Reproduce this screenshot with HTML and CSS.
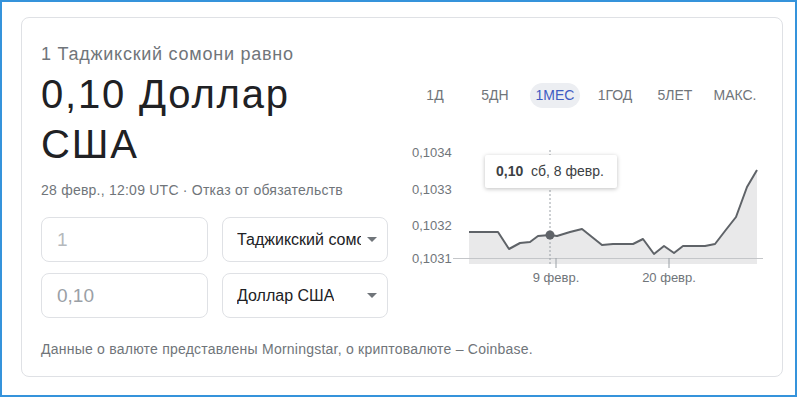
FILE: index.html
```html
<!DOCTYPE html>
<html lang="ru">
<head>
    <meta charset="UTF-8">
    <meta name="viewport" content="width=device-width, initial-scale=1.0">
    <link rel="stylesheet" href="styles.css">
    <title>Конвертер валют</title>
</head>
<body>
<div class="frame">
    <div class="card">
        <div class="top">
            <div class="left">
                <div class="subtitle">1 Таджикский сомони равно</div>
                <div class="result">0,10 Доллар<br>США</div>
                <div class="date">28 февр., 12:09 UTC · <span class="disclaimer">Отказ от обязательств</span></div>

                <div class="converter">
                    <div class="field amount one">1</div>
                    <div class="field select">
                        <span class="select-text">Таджикский сомони</span>
                        <span class="arrow"></span>
                    </div>
                    <div class="field amount">0,10</div>
                    <div class="field select">
                        <span class="select-text">Доллар США</span>
                        <span class="arrow"></span>
                    </div>
                </div>
            </div>

            <div class="right">
                <div class="tabs">
                    <span class="tab">1Д</span>
                    <span class="tab">5ДН</span>
                    <span class="tab active">1МЕС</span>
                    <span class="tab">1ГОД</span>
                    <span class="tab">5ЛЕТ</span>
                    <span class="tab">МАКС.</span>
                </div>

                <div class="chart">
                    <svg width="370" height="150" viewBox="0 0 370 150">
                        <text class="ylabel" x="7" y="17">0,1034</text>
                        <text class="ylabel" x="7" y="54">0,1033</text>
                        <text class="ylabel" x="7" y="90">0,1032</text>
                        <text class="ylabel" x="7" y="123">0,1031</text>

                        <polygon fill="#e9e9ea" points="64,92 93,92 104,109 115,103 125,102 133,96 145,95 152,96 165,92 177,89 197,105 208,104 228,104 238,99 249,114 259,106 269,113 278,106 300,106 310,104 320,91 331,77 342,47 352,30 352,124 64,124"/>

                        <line x1="48" y1="118.5" x2="358" y2="118.5" stroke="#c4c6c9" stroke-width="1"/>
                        <line x1="151" y1="118" x2="151" y2="128" stroke="#9aa0a6" stroke-width="1"/>
                        <line x1="264" y1="118" x2="264" y2="128" stroke="#9aa0a6" stroke-width="1"/>

                        <line x1="145" y1="10" x2="145" y2="124" stroke="#9aa0a6" stroke-width="1" stroke-dasharray="2,2"/>

                        <polyline fill="none" stroke="#5f6368" stroke-width="2" stroke-linejoin="round" points="64,92 93,92 104,109 115,103 125,102 133,96 145,95 152,96 165,92 177,89 197,105 208,104 228,104 238,99 249,114 259,106 269,113 278,106 300,106 310,104 320,91 331,77 342,47 352,30"/>
                        <circle cx="145" cy="95" r="4.5" fill="#5f6368"/>

                        <text class="xlabel" x="151" y="142">9 февр.</text>
                        <text class="xlabel" x="264" y="142">20 февр.</text>
                    </svg>
                    <div class="tooltip"><b>0,10</b>&nbsp; сб, 8 февр.</div>
                </div>
            </div>
        </div>

        <div class="source">Данные о валюте представлены Morningstar, о криптовалюте – Coinbase.</div>
    </div>
</div>
</body>
</html>
```

FILE: styles.css
```css
* {
    box-sizing: border-box;
}

body {
    margin: 0;
    background-color: white;
    font-family: "Liberation Sans", Arial, sans-serif;
}

.frame {
    width: 797px;
    height: 397px;
    border: 2px solid #3593db;
    padding: 15px 0 0 19px;
}

.card {
    width: 762px;
    height: 360px;
    border: 1px solid #dfe1e5;
    border-radius: 8px;
    padding: 24px 7px 0 19px;
}

.top {
    display: flex;
    align-items: flex-start;
    gap: 17px;
}

.left {
    width: 347px;
}

.subtitle {
    font-size: 18px;
    line-height: 24px;
    letter-spacing: 0.75px;
    color: #70757a;
}

.result {
    margin-top: 3px;
    font-size: 40px;
    line-height: 50px;
    letter-spacing: 1.8px;
    color: #202124;
}

.date {
    margin-top: 11px;
    font-size: 14px;
    line-height: 20px;
    letter-spacing: 0.23px;
    color: #70757a;
}

.converter {
    margin-top: 17px;
    display: grid;
    grid-template-columns: 167px 166px;
    gap: 11px 14px;
}

.field {
    height: 45px;
    border: 1px solid #dfe1e5;
    border-radius: 8px;
    display: flex;
    align-items: center;
    padding-left: 15px;
}

.amount {
    font-size: 19px;
    color: #9aa0a6;
}

.amount.one {
    color: #b5b9bd;
}

.select {
    font-size: 16px;
    color: #202124;
    justify-content: space-between;
    padding-left: 14px;
    padding-right: 10px;
}

.select-text {
    white-space: nowrap;
    overflow: hidden;
    max-width: 124px;
}

.arrow {
    width: 0;
    height: 0;
    border-left: 5px solid transparent;
    border-right: 5px solid transparent;
    border-top: 5px solid #70757a;
}

.right {
    width: 370px;
    padding-top: 41px;
}

.tabs {
    display: flex;
    gap: 10px;
    padding-left: 5px;
}

.tab {
    width: 50px;
    height: 25px;
    line-height: 25px;
    border-radius: 13px;
    text-align: center;
    font-size: 14px;
    color: #70757a;
}

.tab.active {
    background-color: #eceef2;
    color: #3f5bc2;
}

.chart {
    position: relative;
    margin-top: 32px;
    height: 150px;
}

.chart svg {
    display: block;
}

.ylabel {
    font-family: "Liberation Sans", Arial, sans-serif;
    font-size: 13px;
    fill: #70757a;
}

.xlabel {
    font-family: "Liberation Sans", Arial, sans-serif;
    font-size: 13px;
    fill: #70757a;
    text-anchor: middle;
}

.tooltip {
    position: absolute;
    left: 80px;
    top: 15px;
    width: 132px;
    height: 33px;
    background-color: white;
    border-radius: 2px;
    box-shadow: 0 1px 4px rgba(0, 0, 0, 0.25);
    font-size: 14px;
    line-height: 33px;
    color: #3c4043;
    padding-left: 11px;
}

.tooltip b {
    color: #3c4043;
}

.source {
    margin-top: 21px;
    font-size: 14px;
    line-height: 20px;
    letter-spacing: 0.23px;
    color: #70757a;
}
```
